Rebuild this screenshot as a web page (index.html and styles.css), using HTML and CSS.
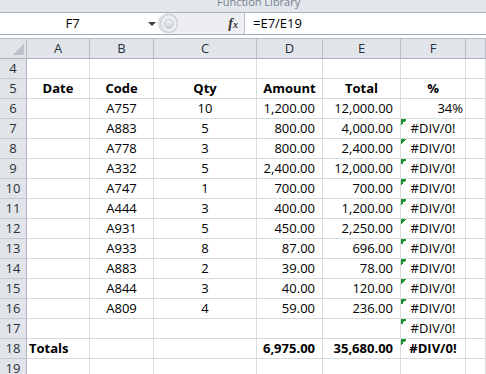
FILE: index.html
```html
<!DOCTYPE html>
<html lang="en">
<head>
  <meta charset="UTF-8">
  <meta name="viewport" content="width=device-width, initial-scale=1.0">
  <title>Sales Sheet</title>
  <link rel="stylesheet" href="styles.css">
</head>
<body>

  <div class="ribbon"><span class="ribbon-label">Function Library</span></div>

  <div class="formula-bar">
    <div class="name-box">
      <span class="name">F7</span>
      <span class="drop"><span class="arrow"></span></span>
    </div>
    <div class="fx-area">
      <span class="splitter"><span class="knob"></span></span>
      <span class="fx">f<span class="fx-x">x</span></span>
    </div>
    <div class="formula">=E7/E19</div>
  </div>

  <div class="sheet">
    <div class="row head">
      <div class="corner"></div>
      <div class="ch">A</div>
      <div class="ch">B</div>
      <div class="ch">C</div>
      <div class="ch">D</div>
      <div class="ch">E</div>
      <div class="ch">F</div>
      <div class="ch"></div>
    </div>

    <div class="row">
      <div class="rh">4</div>
      <div class="cell"></div><div class="cell"></div><div class="cell"></div><div class="cell"></div><div class="cell"></div><div class="cell"></div><div class="cell"></div>
    </div>
    <div class="row">
      <div class="rh">5</div>
      <div class="cell ctr b">Date</div>
      <div class="cell ctr b">Code</div>
      <div class="cell ctr b">Qty</div>
      <div class="cell ctr b">Amount</div>
      <div class="cell ctr b">Total</div>
      <div class="cell ctr b">%</div>
      <div class="cell"></div>
    </div>
    <div class="row">
      <div class="rh">6</div>
      <div class="cell"></div>
      <div class="cell ctr">A757</div>
      <div class="cell ctr">10</div>
      <div class="cell num">1,200.00</div>
      <div class="cell num">12,000.00</div>
      <div class="cell pct">34%</div>
      <div class="cell"></div>
    </div>
    <div class="row">
      <div class="rh">7</div>
      <div class="cell"></div>
      <div class="cell ctr">A883</div>
      <div class="cell ctr">5</div>
      <div class="cell num">800.00</div>
      <div class="cell num">4,000.00</div>
      <div class="cell err">#DIV/0!</div>
      <div class="cell"></div>
    </div>
    <div class="row">
      <div class="rh">8</div>
      <div class="cell"></div>
      <div class="cell ctr">A778</div>
      <div class="cell ctr">3</div>
      <div class="cell num">800.00</div>
      <div class="cell num">2,400.00</div>
      <div class="cell err">#DIV/0!</div>
      <div class="cell"></div>
    </div>
    <div class="row">
      <div class="rh">9</div>
      <div class="cell"></div>
      <div class="cell ctr">A332</div>
      <div class="cell ctr">5</div>
      <div class="cell num">2,400.00</div>
      <div class="cell num">12,000.00</div>
      <div class="cell err">#DIV/0!</div>
      <div class="cell"></div>
    </div>
    <div class="row">
      <div class="rh">10</div>
      <div class="cell"></div>
      <div class="cell ctr">A747</div>
      <div class="cell ctr">1</div>
      <div class="cell num">700.00</div>
      <div class="cell num">700.00</div>
      <div class="cell err">#DIV/0!</div>
      <div class="cell"></div>
    </div>
    <div class="row">
      <div class="rh">11</div>
      <div class="cell"></div>
      <div class="cell ctr">A444</div>
      <div class="cell ctr">3</div>
      <div class="cell num">400.00</div>
      <div class="cell num">1,200.00</div>
      <div class="cell err">#DIV/0!</div>
      <div class="cell"></div>
    </div>
    <div class="row">
      <div class="rh">12</div>
      <div class="cell"></div>
      <div class="cell ctr">A931</div>
      <div class="cell ctr">5</div>
      <div class="cell num">450.00</div>
      <div class="cell num">2,250.00</div>
      <div class="cell err">#DIV/0!</div>
      <div class="cell"></div>
    </div>
    <div class="row">
      <div class="rh">13</div>
      <div class="cell"></div>
      <div class="cell ctr">A933</div>
      <div class="cell ctr">8</div>
      <div class="cell num">87.00</div>
      <div class="cell num">696.00</div>
      <div class="cell err">#DIV/0!</div>
      <div class="cell"></div>
    </div>
    <div class="row">
      <div class="rh">14</div>
      <div class="cell"></div>
      <div class="cell ctr">A883</div>
      <div class="cell ctr">2</div>
      <div class="cell num">39.00</div>
      <div class="cell num">78.00</div>
      <div class="cell err">#DIV/0!</div>
      <div class="cell"></div>
    </div>
    <div class="row">
      <div class="rh">15</div>
      <div class="cell"></div>
      <div class="cell ctr">A844</div>
      <div class="cell ctr">3</div>
      <div class="cell num">40.00</div>
      <div class="cell num">120.00</div>
      <div class="cell err">#DIV/0!</div>
      <div class="cell"></div>
    </div>
    <div class="row">
      <div class="rh">16</div>
      <div class="cell"></div>
      <div class="cell ctr">A809</div>
      <div class="cell ctr">4</div>
      <div class="cell num">59.00</div>
      <div class="cell num">236.00</div>
      <div class="cell err">#DIV/0!</div>
      <div class="cell"></div>
    </div>
    <div class="row">
      <div class="rh">17</div>
      <div class="cell"></div>
      <div class="cell"></div>
      <div class="cell"></div>
      <div class="cell"></div>
      <div class="cell"></div>
      <div class="cell err">#DIV/0!</div>
      <div class="cell"></div>
    </div>
    <div class="row">
      <div class="rh">18</div>
      <div class="cell b">Totals</div>
      <div class="cell"></div>
      <div class="cell"></div>
      <div class="cell num b">6,975.00</div>
      <div class="cell num b">35,680.00</div>
      <div class="cell err b">#DIV/0!</div>
      <div class="cell"></div>
    </div>
    <div class="row">
      <div class="rh">19</div>
      <div class="cell"></div><div class="cell"></div><div class="cell"></div><div class="cell"></div><div class="cell"></div><div class="cell"></div><div class="cell"></div>
    </div>
  </div>

</body>
</html>
```

FILE: styles.css
```css
* {
  margin: 0;
  padding: 0;
  box-sizing: border-box;
}

body {
  font-family: "Open Sans", sans-serif;
  font-size: 13px;
  color: #000;
  background-color: #fff;
  overflow: hidden;
}

/* Ribbon strip (cut off at the top) */
.ribbon {
  height: 13px;
  background-color: #e3e7ec;
  border-bottom: 1px solid #a9b1bb;
  overflow: hidden;
}

.ribbon-label {
  display: block;
  margin-top: -6px;
  padding-left: 217px;
  font-size: 11px;
  line-height: 16px;
  color: #76818f;
}

/* Formula bar */
.formula-bar {
  display: flex;
  height: 22px;
  border-bottom: 1px solid #a6aeb8;
  background-color: #fff;
}

.name-box {
  width: 158px;
  display: flex;
  align-items: center;
}

.name {
  width: 145px;
  text-align: center;
  line-height: 21px;
}

.drop {
  width: 13px;
  display: flex;
  justify-content: center;
}

.arrow {
  width: 0;
  height: 0;
  border-left: 4px solid transparent;
  border-right: 4px solid transparent;
  border-top: 4px solid #3b3b3b;
}

.fx-area {
  width: 86px;
  display: flex;
  align-items: center;
  justify-content: space-between;
  padding-right: 6px;
  background-color: #eceef1;
  border-radius: 11px 0 0 11px;
  border-left: 1px solid #c9ced4;
}

.splitter {
  width: 18px;
  height: 19px;
  margin-left: 1px;
  border-radius: 50%;
  border: 1px solid #c3c8cf;
  display: flex;
  align-items: center;
  justify-content: center;
}

.knob {
  width: 10px;
  height: 10px;
  border-radius: 50%;
  background: linear-gradient(#f4f5f7, #c9cdd3);
  border: 1px solid #c7ccd2;
}

.fx {
  font-family: "Liberation Serif", serif;
  font-style: italic;
  font-weight: bold;
  font-size: 14px;
  color: #333;
}

.fx-x {
  font-size: 10px;
}

.formula {
  flex: 1;
  border-left: 1px solid #b9bfc7;
  padding-left: 8px;
  line-height: 21px;
}

/* Sheet grid */
.sheet {
  margin-top: 3px;
  border-top: 1px solid #b7bec7;
}

.row {
  display: grid;
  grid-template-columns: 27px 63px 64px 103px 66px 78px 65px 1fr;
  height: 20px;
}

.head {
  background-color: #e1e5ea;
}

.corner {
  border-right: 1px solid #b3bac3;
  border-bottom: 1px solid #aab1bb;
  background-image: linear-gradient(to top left, #bcc3cb 50%, transparent 50%);
  background-size: 12px 12px;
  background-position: right 2px bottom 3px;
  background-repeat: no-repeat;
}

.ch {
  border-right: 1px solid #b8bec6;
  border-bottom: 1px solid #aab1bb;
  text-align: center;
  line-height: 19px;
  color: #26303b;
}

.rh {
  background-color: #e1e5ea;
  border-right: 1px solid #aeb5be;
  border-bottom: 1px solid #c3c9d0;
  text-align: center;
  line-height: 19px;
  color: #2a2f36;
}

.cell {
  border-right: 1px solid #d9dcdf;
  border-bottom: 1px solid #d9dcdf;
  line-height: 19px;
  padding-left: 2px;
  white-space: nowrap;
  overflow: hidden;
}

.ctr {
  text-align: center;
  padding-left: 0;
}

.num {
  text-align: right;
  padding-right: 7px;
}

.pct {
  text-align: right;
  padding-right: 2px;
}

/* error cells carry the little green flag */
.err {
  text-align: center;
  padding-left: 0;
  background-image: linear-gradient(to bottom right, #1f902e 50%, transparent 50%);
  background-size: 6px 6px;
  background-position: 0 0;
  background-repeat: no-repeat;
}

.b {
  font-weight: bold;
}
```
